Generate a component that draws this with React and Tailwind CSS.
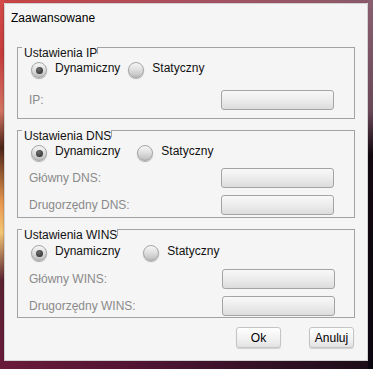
import React, { useState } from 'react';

function Radio({ checked, label, onClick, className = '' }) {
  return (
    <div className={`flex items-start gap-[8px] cursor-default ${className}`} onClick={onClick}>
      <div className="w-[16px] h-[16px] rounded-full border border-[#a6a6a6] bg-[linear-gradient(180deg,#f6f6f6_0%,#dedede_50%,#bdbdbd_100%)] shadow-[0_1px_1px_rgba(0,0,0,0.3)] flex items-center justify-center">
        {checked && (
          <div className="w-[7px] h-[7px] rounded-full bg-[radial-gradient(circle_at_40%_35%,#707070_0%,#3a3a3a_70%)]" />
        )}
      </div>
      <span className="-mt-[1px] leading-[14px] text-[#111]">{label}</span>
    </div>
  );
}

function Field({ label }) {
  return (
    <div className="flex items-center justify-between h-[20px]">
      <span className="leading-[14px] text-[#8a8a8a]">{label}</span>
      <div className="w-[113px] h-[20px] rounded-[3px] border border-[#a4a4a4] bg-[linear-gradient(180deg,#f8f8f8_0%,#ececec_50%,#dcdcdc_100%)]" />
    </div>
  );
}

function Group({ title, height, children }) {
  return (
    <div className={`border border-[#a2a2a2] ${height}`}>
      <div className="-mt-[2px] ml-[4px] w-fit flex items-start bg-[#f5f5f5]">
        <span className="pl-[2px] leading-[14px] text-[#111]">{title}</span>
        <div className="w-[1px] h-[7px] mt-[1px] bg-[#a2a2a2]" />
      </div>
      {children}
    </div>
  );
}

export default function App() {
  const [ip, setIp] = useState('dyn');
  const [dns, setDns] = useState('dyn');
  const [wins, setWins] = useState('dyn');

  return (
    <div className="w-[373px] h-[369px] flex overflow-hidden text-[12px] font-['Liberation_Sans',Arial,sans-serif]">
      {/* left strip of the desktop behind */}
      <div className="w-[4px] h-full bg-[linear-gradient(180deg,#d44a48_0%,#c43c3c_15%,#d27462_30%,#4c2418_40%,#e8984e_55%,#f4c676_63%,#5a2232_76%,#6a1a3a_100%)]" />

      <div className="w-[364px] h-full flex flex-col">
        <div className="h-[3px] bg-[linear-gradient(90deg,#c84444_0%,#a85060_50%,#8a5a6a_100%)]" />

        {/* dialog */}
        <div className="h-[358px] rounded-[2px] border border-[#d2d2d2] bg-[#f5f5f5] shadow-[0_1px_2px_rgba(0,0,0,0.4)] pt-[7px] pl-[12px] pr-[12px] flex flex-col">
          <div className="h-[14px] leading-[14px] -ml-[6px] text-[#000]">Zaawansowane</div>

          {/* IP */}
          <div className="mt-[22px]">
            <Group title="Ustawienia IP" height="h-[72px]">
              <div className="mt-[2px] pl-[13px] flex">
                <Radio checked={ip === 'dyn'} label="Dynamiczny" onClick={() => setIp('dyn')} className="mr-[8px]" />
                <Radio checked={ip === 'stat'} label="Statyczny" onClick={() => setIp('stat')} />
              </div>
              <div className="mt-[12px] pl-[11px] pr-[20px]">
                <Field label="IP:" />
              </div>
            </Group>
          </div>

          {/* DNS */}
          <div className="mt-[11px]">
            <Group title="Ustawienia DNS" height="h-[88px]">
              <div className="mt-[2px] pl-[13px] flex">
                <Radio checked={dns === 'dyn'} label="Dynamiczny" onClick={() => setDns('dyn')} className="mr-[17px]" />
                <Radio checked={dns === 'stat'} label="Statyczny" onClick={() => setDns('stat')} />
              </div>
              <div className="mt-[7px] pl-[11px] pr-[20px] flex flex-col gap-[7px]">
                <Field label="Główny DNS:" />
                <Field label="Drugorzędny DNS:" />
              </div>
            </Group>
          </div>

          {/* WINS */}
          <div className="mt-[11px]">
            <Group title="Ustawienia WINS" height="h-[89px]">
              <div className="mt-[3px] pl-[13px] flex">
                <Radio checked={wins === 'dyn'} label="Dynamiczny" onClick={() => setWins('dyn')} className="mr-[23px]" />
                <Radio checked={wins === 'stat'} label="Statyczny" onClick={() => setWins('stat')} />
              </div>
              <div className="mt-[8px] pl-[11px] pr-[19px] flex flex-col gap-[7px]">
                <Field label="Główny WINS:" />
                <Field label="Drugorzędny WINS:" />
              </div>
            </Group>
          </div>

          {/* buttons */}
          <div className="mt-[9px] flex justify-end gap-[28px] pr-[1px]">
            <button className="w-[45px] h-[21px] rounded-[3px] border border-[#c4c4c4] bg-[linear-gradient(180deg,#ffffff_0%,#f0f0f0_60%,#e2e2e2_100%)] shadow-[0_1px_1px_rgba(0,0,0,0.15)] text-[12px] text-[#000] leading-[14px]">
              Ok
            </button>
            <button className="w-[45px] h-[21px] rounded-[3px] border border-[#c4c4c4] bg-[linear-gradient(180deg,#ffffff_0%,#f0f0f0_60%,#e2e2e2_100%)] shadow-[0_1px_1px_rgba(0,0,0,0.15)] text-[12px] text-[#000] leading-[14px]">
              Anuluj
            </button>
          </div>
        </div>

        <div className="flex-1 bg-[linear-gradient(90deg,#6a1a3a_0%,#4a1430_45%,#1c0c18_100%)]" />
      </div>

      {/* right strip */}
      <div className="w-[5px] h-full bg-[linear-gradient(180deg,#8a6070_0%,#6a4858_30%,#120810_42%,#0c0610_100%)]" />
    </div>
  );
}
